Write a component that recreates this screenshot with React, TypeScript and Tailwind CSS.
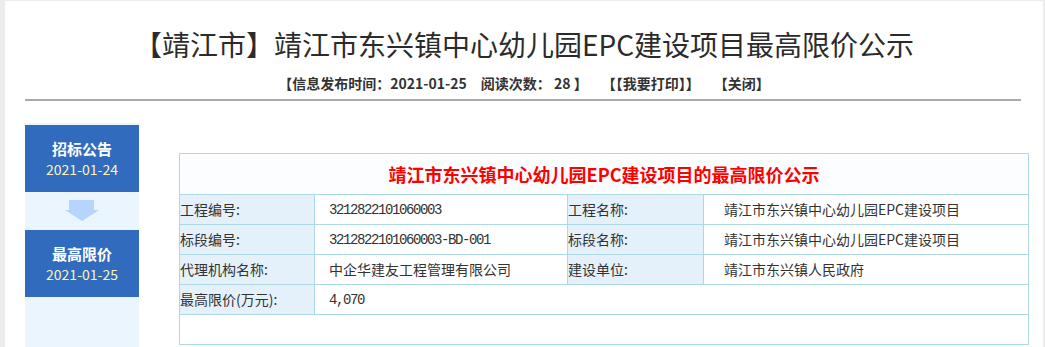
const cjk = "font-['Microsoft_YaHei','Noto_Sans_CJK_SC',sans-serif]";
const mono = "font-['Liberation_Mono','Noto_Sans_CJK_SC',monospace] tracking-[-1.4px]";

// Left timeline steps
const steps = [
  { title: "招标公告", date: "2021-01-24" },
  { title: "最高限价", date: "2021-01-25" },
];

function Arrow() {
  return (
    <svg width="34" height="21" viewBox="0 0 34 21">
      <path d="M4 0H29V10H34L17 21L0 10H4Z" fill="#b5d5fd" />
    </svg>
  );
}

function Label({ children }: { children: React.ReactNode }) {
  return (
    <td className="border border-[#add8e6] bg-[#e4f1fa] p-0 align-middle text-[14px] text-[#333]">
      {children}
    </td>
  );
}

function Value({ children, pad, ascii, span }: { children: React.ReactNode; pad: string; ascii?: boolean; span?: number }) {
  return (
    <td colSpan={span} className={`border border-[#add8e6] bg-white align-middle text-[14px] text-[#333] ${pad}`}>
      <span className={ascii ? mono : ""}>{children}</span>
    </td>
  );
}

export default function App() {
  return (
    <div className={`min-h-[347px] bg-[#ececec] pl-[5px] pr-[2px] pt-px ${cjk}`}>
      <div className="min-h-[346px] bg-white pt-[23px]">
        <h1 className="text-center text-[28px] leading-[40px] font-normal text-[#2b2b2b]">
          【靖江市】靖江市东兴镇中心幼儿园EPC建设项目最高限价公示
        </h1>
        <div className="mt-[9px] flex justify-center text-[14px] leading-[20px] font-bold text-[#333] whitespace-pre">
          <span>【信息发布时间：2021-01-25</span>
          <span className="ml-[14px]">阅读次数： 28 】</span>
          <span className="ml-[14px]">【【我要打印】】</span>
          <span className="ml-[14px]">【关闭】</span>
        </div>
        <div className="mt-[6px] ml-[20px] mr-[22px] h-[2px] bg-[#aaaaaa]" />

        <div className="mt-[22px] ml-[20px] flex items-start">
          <div className="flex h-[224px] w-[114px] shrink-0 flex-col bg-[#eaf5fe] pt-[2px]">
            {steps.map((s, i) => (
              <div key={s.title}>
                {i > 0 && (
                  <div className="flex h-[38px] items-start justify-center pt-[8px]">
                    <Arrow />
                  </div>
                )}
                <div className="flex h-[67px] flex-col items-center justify-center bg-[#306bbd]">
                  <div className="text-[15px] leading-[20px] font-bold text-white">{s.title}</div>
                  <div className="text-[14px] leading-[20px] text-[#fdf3b8]">{s.date}</div>
                </div>
              </div>
            ))}
          </div>

          <table className="ml-[40px] mt-[30px] w-[849px] table-fixed border-collapse border border-[#add8e6]">
            <colgroup>
              <col className="w-[135px]" />
              <col className="w-[253px]" />
              <col className="w-[136px]" />
              <col className="w-[325px]" />
            </colgroup>
            <tbody>
              <tr className="h-[41px]">
                <td colSpan={4} className="border border-[#add8e6] bg-[#fbfdff] pt-[1px] text-center text-[18px] font-bold text-[#ff0000]">
                  靖江市东兴镇中心幼儿园EPC建设项目的最高限价公示
                </td>
              </tr>
              <tr className="h-[30px]">
                <Label>工程编号:</Label>
                <Value pad="pl-[14px]" ascii>3212822101060003</Value>
                <Label>工程名称:</Label>
                <Value pad="pl-[20px]">靖江市东兴镇中心幼儿园EPC建设项目</Value>
              </tr>
              <tr className="h-[30px]">
                <Label>标段编号:</Label>
                <Value pad="pl-[14px]" ascii>3212822101060003-BD-001</Value>
                <Label>标段名称:</Label>
                <Value pad="pl-[20px]">靖江市东兴镇中心幼儿园EPC建设项目</Value>
              </tr>
              <tr className="h-[30px]">
                <Label>代理机构名称:</Label>
                <Value pad="pl-[14px]">中企华建友工程管理有限公司</Value>
                <Label>建设单位:</Label>
                <Value pad="pl-[20px]">靖江市东兴镇人民政府</Value>
              </tr>
              <tr className="h-[30px]">
                <Label>最高限价(万元):</Label>
                <Value pad="pl-[14px]" ascii span={3}>4,070</Value>
              </tr>
              <tr className="h-[30px]">
                <td colSpan={4} className="border border-[#add8e6] bg-white" />
              </tr>
            </tbody>
          </table>
        </div>
      </div>
    </div>
  );
}
